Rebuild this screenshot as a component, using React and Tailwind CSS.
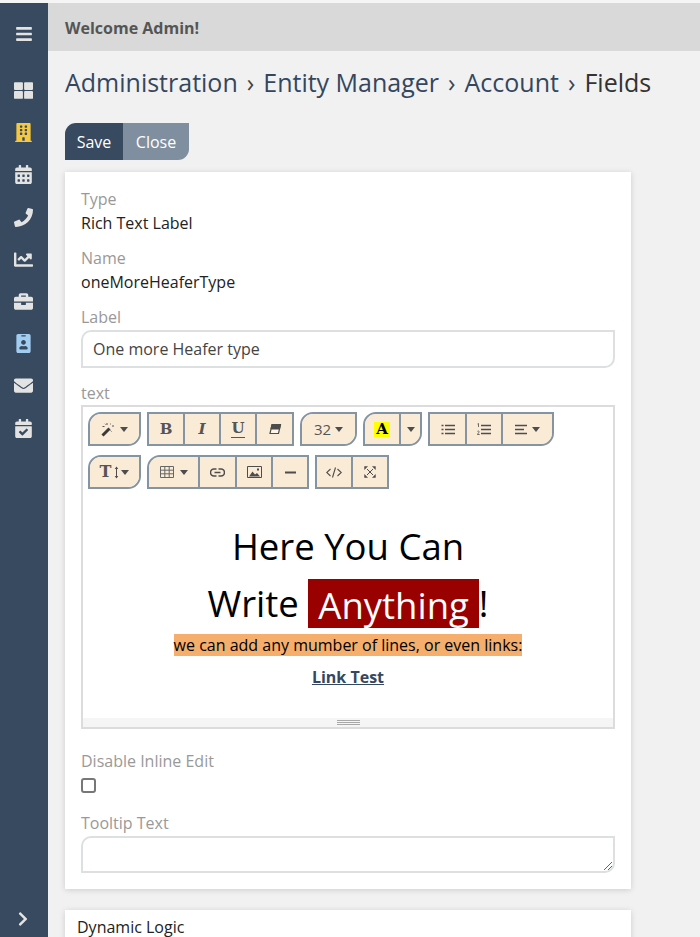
import React from 'react';
import { FaBars, FaThLarge, FaBuilding, FaCalendarAlt, FaPhone, FaChartLine, FaBriefcase, FaIdBadge, FaEnvelope, FaCalendarCheck, FaChevronRight } from 'react-icons/fa';

const Caret = ({ className = '' }) => (
  <svg className={className} width="8" height="5" viewBox="0 0 8 5"><path d="M0 0H8L4 5Z" fill="#4d4d4d" /></svg>
);

const Ico = ({ w = 14, h = 14, vb, children }) => (
  <svg width={w} height={h} viewBox={vb || `0 0 ${w} ${h}`} fill="none" stroke="#4d4d4d">{children}</svg>
);

const Btn = ({ w, children, last }) => (
  <div className={`h-full flex items-center justify-center gap-[4px] text-[#555] bg-[#faebd7] ${w} ${last ? '' : 'border-r-2 border-[#8494a3]'}`}>
    {children}
  </div>
);

const Group = ({ children, tl, br }) => (
  <div className={`h-[34px] flex border-2 border-[#8494a3] bg-[#faebd7] overflow-hidden ${tl ? 'rounded-tl-[13px]' : ''} ${br ? 'rounded-br-[13px]' : ''}`}>
    {children}
  </div>
);

const serif = 'font-["DejaVu_Serif",serif] font-bold text-[15px] leading-none';

const nav = [
  [FaThLarge, 'text-[#e3e3e3]'],
  [FaBuilding, 'text-[#f5c842]'],
  [FaCalendarAlt, 'text-[#e3e3e3]'],
  [FaPhone, 'text-[#e3e3e3]'],
  [FaChartLine, 'text-[#e3e3e3]'],
  [FaBriefcase, 'text-[#e3e3e3]'],
  [FaIdBadge, 'text-[#a3cdf0]'],
  [FaEnvelope, 'text-[#e3e3e3]'],
  [FaCalendarCheck, 'text-[#e3e3e3]'],
];

const Field = ({ label, value, mt }) => (
  <div className={mt}>
    <div className="text-[#999] text-[16px] leading-[20px]">{label}</div>
    <div className="mt-[2px] text-[#222] text-[16px] leading-[24px]">{value}</div>
  </div>
);

const Sep = () => <span className="text-[#444] mx-[2.5px]">›</span>;

export default function App() {
  return (
    <div className='h-[937px] w-[700px] overflow-hidden flex flex-col bg-[#f1f1f1] font-["Open_Sans",sans-serif]'>
      <div className="h-[3px] shrink-0 bg-[#f5f5f5]" />
      <div className="flex flex-1 min-h-0">
        <aside className="w-[48px] shrink-0 bg-[#374a5f] flex flex-col items-center relative">
          <FaBars className="mt-[22px] text-[#e3e3e3] text-[18px]" />
          <div className="mt-[38px] pr-[2px] flex flex-col items-center gap-[23.2px]">
            {nav.map(([I, c], i) => (
              <div key={i} className="h-[19px] flex items-center justify-center">
                <I className={`${c} text-[19px]`} />
              </div>
            ))}
          </div>
          <FaChevronRight className="absolute bottom-[10px] left-[15px] text-[#e3e3e3] text-[16px]" />
        </aside>
        <main className="flex-1 min-w-0">
          <header className="h-[48px] bg-[#d9d9d9] flex items-center pl-[17px] pt-[1px] text-[16px] font-bold text-[#555]">Welcome Admin!</header>
          <div className="pl-[17px]">
            <h1 className="mt-[13px] text-[25px] leading-[36px] text-[#34475e] whitespace-nowrap">
              Administration <Sep /> Entity Manager <Sep /> Account <Sep /> <span className="text-[#333]">Fields</span>
            </h1>
            <div className="mt-[23px] flex w-fit h-[37px] text-[16px] text-white rounded-tl-[11px] rounded-br-[11px] overflow-hidden">
              <div className="w-[58px] bg-[#374a5f] flex items-center justify-center">Save</div>
              <div className="w-[66px] bg-[#7f8f9f] flex items-center justify-center">Close</div>
            </div>
            <section className="mt-[12px] w-[566px] h-[717px] bg-white shadow-[0_1px_6px_rgba(0,0,0,0.15)] px-[16px] pt-[17px]">
              <Field label="Type" value="Rich Text Label" />
              <Field label="Name" value="oneMoreHeaferType" mt="mt-[13px]" />
              <div className="mt-[13px] text-[#999] text-[16px] leading-[20px]">Label</div>
              <div className="mt-[3px] h-[38px] border-2 border-[#dde0e0] rounded-tl-[10px] rounded-br-[10px] flex items-center pl-[10px] text-[16px] text-[#444]">One more Heafer type</div>
              <div className="mt-[15px] text-[#999] text-[16px] leading-[20px]">text</div>
              <div className="mt-[2px] h-[324px] border-2 border-[#dcdcdc] flex flex-col">
                <div className="pl-[5px] pt-[5px] flex flex-col gap-[9px]">
                  <div className="flex gap-[6px]">
                    <Group tl br>
                      <Btn w="w-[49px]" last>
                        <Ico w={15} h={15}>
                          <path d="M1.5 13.5L8.5 6.5" stroke="#3a3a3a" strokeWidth="3" />
                          <path d="M6 1v2M1.5 4.5h2M11 4h2M9.5 8.5l1 1M10 1.5l-.8.8M4 1.8l.8.8" strokeWidth="1" stroke="#555" />
                        </Ico>
                        <Caret />
                      </Btn>
                    </Group>
                    <Group>
                      <Btn w="w-[36px]"><span className={serif}>B</span></Btn>
                      <Btn w="w-[36px]"><span className={`${serif} italic`}>I</span></Btn>
                      <Btn w="w-[36px]">
                        <span className={`${serif} border-b-[1.5px] border-[#555] pb-px`}>U</span>
                      </Btn>
                      <Btn w="w-[35px]" last>
                        <Ico w={14} h={12}>
                          <path d="M4 1.5h8.5L10.5 10.5H2Z" fill="#fff5e8" stroke="#4d4d4d" strokeWidth="1.2" />
                          <path d="M4 1.5h8.5L11.5 6H3Z" fill="#4d4d4d" />
                        </Ico>
                      </Btn>
                    </Group>
                    <Group tl br><Btn w="w-[53px]" last><span className="text-[15px] text-[#555]">32</span><Caret /></Btn></Group>
                    <Group tl br>
                      <Btn w="w-[36px]"><span className={`${serif} bg-[#ffff00] text-black px-[2px] leading-[20px]`}>A</span></Btn>
                      <Btn w="w-[19px]" last><Caret /></Btn>
                    </Group>
                    <Group br>
                      <Btn w="w-[37px]">
                        <Ico w={14} h={11}>
                          <path d="M4 1.5H14M4 5.5H14M4 9.5H14" strokeWidth="1.6" />
                          <path d="M0.5 1.5H2.5M0.5 5.5H2.5M0.5 9.5H2.5" strokeWidth="1.6" />
                        </Ico>
                      </Btn>
                      <Btn w="w-[36px]">
                        <Ico w={14} h={13}>
                          <path d="M4 2.5H14M4 6.5H14M4 10.5H14" strokeWidth="1.6" />
                          <path d="M.5 1L1.5.5V4" strokeWidth=".8" />
                          <path d="M.3 8.5C1 7.5 2.5 8 2 9.2L.3 11.5H2.7" strokeWidth=".8" />
                        </Ico>
                      </Btn>
                      <Btn w="w-[49px]" last>
                        <Ico w={13} h={11}>
                          <path d="M0 1.5H12M0 5.5H9M0 9.5H12" strokeWidth="1.6" />
                        </Ico>
                        <Caret />
                      </Btn>
                    </Group>
                  </div>
                  <div className="flex gap-[6px]">
                    <Group tl br>
                      <Btn w="w-[49px]" last>
                        <span className={`${serif} text-[16px] -mr-[1px]`}>T</span>
                        <Ico w={5} h={13}>
                          <path d="M2.5 1V12" strokeWidth="1" />
                          <path d="M.7 3L2.5.5 4.3 3ZM.7 10L2.5 12.5 4.3 10Z" fill="#4d4d4d" stroke="none" />
                        </Ico>
                        <Caret className="-ml-[2px]" />
                      </Btn>
                    </Group>
                    <Group tl>
                      <Btn w="w-[51px]">
                        <Ico w={14} h={12}>
                          <path d="M.5.5H13.5V11.5H.5ZM.5 4.2H13.5M.5 7.8H13.5M4.8.5V11.5M9.2.5V11.5" strokeWidth="1" stroke="#666" />
                        </Ico>
                        <Caret className="ml-[2px]" />
                      </Btn>
                      <Btn w="w-[37px]">
                        <Ico w={15} h={9}>
                          <path d="M6.5 1H4a3.5 3.5 0 0 0 0 7h2.5M8.5 1H11a3.5 3.5 0 0 1 0 7H8.5M4.5 4.5H10.5" strokeWidth="1.6" />
                        </Ico>
                      </Btn>
                      <Btn w="w-[36px]">
                        <Ico w={15} h={12}>
                          <path d="M.5.5H14.5V11.5H.5Z" strokeWidth="1" />
                          <path d="M2 10.5L5.5 5.5 8 8.5 10 7 13 10.5Z" fill="#4d4d4d" stroke="none" />
                          <path d="M10 2.5h2v2h-2Z" fill="#4d4d4d" stroke="none" />
                        </Ico>
                      </Btn>
                      <Btn w="w-[34px]" last>
                        <Ico w={11} h={3}><path d="M0 1.5H11" strokeWidth="2" /></Ico>
                      </Btn>
                    </Group>
                    <Group>
                      <Btn w="w-[36px]">
                        <Ico w={16} h={11}>
                          <path d="M4.5 2L.7 5.5 4.5 9M11.5 2L15.3 5.5 11.5 9M9.5.5L6.5 10.5" strokeWidth="1.1" />
                        </Ico>
                      </Btn>
                      <Btn w="w-[34px]" last>
                        <Ico w={12} h={12}>
                          <path d="M3 3L9 9M9 3L3 9" strokeWidth="1" />
                          <path d="M.3.3H4L.3 4ZM11.7.3H8L11.7 4ZM.3 11.7H4L.3 8ZM11.7 11.7H8L11.7 8Z" fill="#4d4d4d" stroke="none" />
                        </Ico>
                      </Btn>
                    </Group>
                  </div>
                </div>
                <div className="flex-1 flex flex-col items-center text-black">
                  <div className="mt-[30px] text-[36.5px] leading-[54px]">Here You Can</div>
                  <div className="mt-[3px] text-[36.5px] leading-[54px] flex items-center">
                    <span>Write&nbsp;</span><span className="bg-[#990000] text-white px-[10px] h-[49px] leading-[52px]">Anything</span><span>!</span>
                  </div>
                  <div className="mt-[4px] text-[16px] leading-[22px] bg-[#f6ae6d] whitespace-nowrap">we can add any mumber of lines, or even links:</div>
                  <div className="mt-[9px] text-[16px] leading-[24px] font-bold underline text-[#34475e]">Link Test</div>
                </div>
                <div className="h-[9px] bg-[#f5f5f5] flex flex-col items-center justify-center gap-[1px]">
                  <div className="w-[23px] h-px bg-[#a8a8a8]" />
                  <div className="w-[23px] h-px bg-[#a8a8a8]" />
                  <div className="w-[23px] h-px bg-[#a8a8a8]" />
                </div>
              </div>
              <div className="mt-[22px] text-[#999] text-[16px] leading-[20px]">Disable Inline Edit</div>
              <div className="mt-[7px] w-[15px] h-[15px] border-2 border-[#777] rounded-[3px]" />
              <div className="mt-[20px] text-[#999] text-[16px] leading-[20px]">Tooltip Text</div>
              <div className="mt-[3px] h-[37px] border-2 border-[#dde0e0] rounded-tl-[10px] rounded-br-[10px] relative">
                <svg className="absolute right-0 bottom-0 w-[10px] h-[10px]" viewBox="0 0 10 10" stroke="#666" fill="none"><path d="M1 9 L9 1 M5 9 L9 5" /></svg>
              </div>
            </section>
            <section className="mt-[21px] w-[566px] h-[60px] bg-white shadow-[0_1px_6px_rgba(0,0,0,0.15)] pl-[12px] pt-[5px] text-[16px] leading-[24px] text-[#222]">Dynamic Logic</section>
          </div>
        </main>
      </div>
    </div>
  );
}
